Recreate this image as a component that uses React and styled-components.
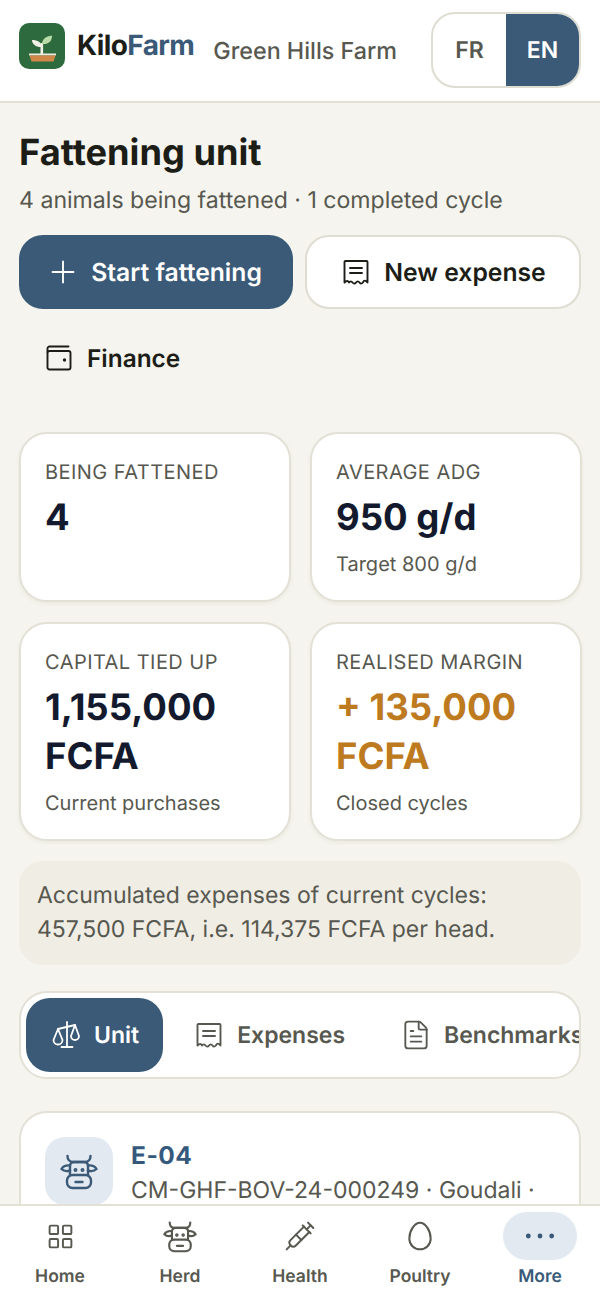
import styled, { createGlobalStyle } from "styled-components";
import { Plus, FileText, LayoutGrid, Syringe, Egg, Ellipsis } from "lucide-react";

const GlobalStyle = createGlobalStyle`
  * { box-sizing: border-box; }
  html, body { margin: 0; height: 100%; overflow: hidden; }
  body {
    background: #f5f4ee;
    font-family: Inter, "Noto Sans", sans-serif;
    color: #1c1d17;
    text-rendering: geometricPrecision;
  }
`;

const Page = styled.div`
  height: 1298px;
  overflow: hidden;
  display: flex;
  flex-direction: column;
`;

const Header = styled.header`
  flex: none;
  height: 103px;
  display: flex;
  align-items: center;
  padding: 0 19px;
  background: #fff;
  border-bottom: 2px solid #e3e1d6;
`;

const LogoMark = styled.svg`
  width: 46px;
  height: 46px;
  flex: none;
  margin-bottom: 9px;
`;

const Brand = styled.div`
  margin-left: 12px;
  margin-bottom: 12px;
  font-size: 28px;
  font-weight: 700;
  letter-spacing: -0.6px;
`;

const BrandAccent = styled.span`
  color: #3a5a78;
`;

const FarmName = styled.div`
  margin-left: 19px;
  flex: 1;
  font-size: 23.3px;
  font-weight: 500;
  color: #57584f;
  white-space: nowrap;
`;

const LangSwitch = styled.div`
  display: flex;
  width: 150px;
  height: 76px;
  margin-bottom: 1px;
  border: 2px solid #dfddd1;
  border-radius: 24px;
  overflow: hidden;
  background: #fff;
`;

const LangOption = styled.div`
  flex: 1;
  display: flex;
  align-items: center;
  justify-content: center;
  font-size: 23px;
  font-weight: 600;
  color: ${(p) => (p.$active ? "#fff" : "#57584f")};
  background: ${(p) => (p.$active ? "#3a5a78" : "transparent")};
`;

const Main = styled.main`
  flex: 1;
  padding: 0 19px;
  min-height: 0;
`;

const Title = styled.h1`
  margin: 25px 0 0;
  font-size: 36.2px;
  line-height: 48px;
  font-weight: 700;
`;

const Subtitle = styled.p`
  margin: 8px 0 0;
  font-size: 23.1px;
  line-height: 32px;
  color: #57584f;
`;

const Actions = styled.div`
  display: flex;
  flex-wrap: wrap;
  gap: 12px;
  margin-top: 19px;
`;

const ActionButton = styled.div`
  height: 74px;
  display: flex;
  align-items: center;
  justify-content: center;
  gap: ${(p) => (p.$primary ? "10px" : "12px")};
  font-size: 24.7px;
  font-weight: 600;
  border-radius: 24px;
  padding-right: ${(p) => (p.$primary ? "5px" : "0")};
  color: ${(p) => (p.$primary ? "#fff" : "#1c1d17")};
  background: ${(p) => (p.$primary ? "#3a5a78" : "#fff")};
  border: 2px solid ${(p) => (p.$primary ? "#3a5a78" : "#dfddd1")};
  width: ${(p) => (p.$primary ? "274px" : "276px")};
`;

const GhostButton = styled.div`
  height: 74px;
  display: flex;
  align-items: center;
  gap: 15px;
  padding: 0 27px;
  font-size: 24.4px;
  font-weight: 600;
  margin-top: 12px;
`;

const Stats = styled.div`
  display: grid;
  grid-template-columns: 272px 272px;
  gap: 20px 19px;
  margin-top: 37px;
`;

const StatCard = styled.div`
  background: #fff;
  border: 2px solid #e3e1d6;
  border-radius: 28px;
  padding: 25px 24px 22px;
  box-shadow: 0 2px 4px rgba(60, 60, 40, 0.06);
`;

const StatLabel = styled.div`
  font-size: 20px;
  line-height: 26px;
  font-weight: 400;
  letter-spacing: 0.45px;
  color: #57584f;
`;

const StatValue = styled.div`
  margin-top: 8px;
  font-size: 36.5px;
  line-height: 49px;
  font-weight: 700;
  color: ${(p) => (p.$accent ? "#bd7a1f" : "#131a2e")};
`;

const StatNote = styled.div`
  margin-top: 8px;
  font-size: 20px;
  line-height: 28px;
  color: #57584f;
`;

const Notice = styled.div`
  margin-top: 20px;
  padding: 17px 18px 19px;
  border-radius: 24px;
  background: #f0ede5;
  font-size: 23px;
  line-height: 34px;
  color: #57584f;
`;

const Tabs = styled.div`
  margin-top: 26px;
  height: 88px;
  display: flex;
  align-items: center;
  gap: 5px;
  padding: 0 5px;
  background: #fff;
  border: 2px solid #e3e1d6;
  border-radius: 28px;
  overflow: hidden;
`;

const Tab = styled.div`
  flex: none;
  height: 74px;
  display: flex;
  align-items: center;
  gap: 12px;
  padding: 0 ${(p) => (p.$active ? "24px" : "25px")};
  border-radius: 24px;
  font-size: 23px;
  font-weight: 600;
  color: ${(p) => (p.$active ? "#fff" : "#57584f")};
  background: ${(p) => (p.$active ? "#3a5a78" : "transparent")};
`;

const AnimalCard = styled.div`
  margin-top: 32px;
  display: flex;
  gap: 18px;
  padding: 24px;
  background: #fff;
  border: 2px solid #e3e1d6;
  border-radius: 28px;
  height: 200px;
`;

const AnimalIcon = styled.div`
  flex: none;
  width: 68px;
  height: 68px;
  display: flex;
  align-items: center;
  justify-content: center;
  border-radius: 20px;
  background: #e2e9f1;
  color: #3a5a78;
`;

const AnimalBody = styled.div`
  min-width: 0;
  padding-top: 2px;
`;

const AnimalName = styled.div`
  font-size: 24.5px;
  line-height: 32px;
  font-weight: 700;
  letter-spacing: 0.5px;
  color: #35597c;
`;

const AnimalMeta = styled.div`
  margin-top: 3px;
  font-size: 23px;
  line-height: 32px;
  color: #57584f;
`;

const BottomNav = styled.nav`
  position: fixed;
  left: 0;
  right: 0;
  bottom: 0;
  height: 94px;
  display: grid;
  grid-template-columns: repeat(5, 1fr);
  background: #fff;
  border-top: 2px solid #e3e1d6;
`;

const NavItem = styled.div`
  display: flex;
  flex-direction: column;
  align-items: center;
  padding-top: 6px;
  font-size: 17.5px;
  font-weight: 600;
  color: ${(p) => (p.$active ? "#3a5a78" : "#57584f")};
`;

const NavIcon = styled.div`
  width: 74px;
  height: 48px;
  display: flex;
  align-items: center;
  justify-content: center;
  border-radius: 24px;
  background: ${(p) => (p.$active ? "#e2e9f1" : "transparent")};
`;

const NavLabel = styled.span`
  margin-top: 6px;
`;

// Logo: seedling in a terracotta tray on a green tile
const Logo = () => (
  <LogoMark viewBox="0 0 46 46">
    <rect width="46" height="46" rx="10" fill="#2d6a3e" />
    <path d="M22.800 31V20" stroke="#f4f1e6" strokeWidth="2.600" fill="none" />
    <path d="M22.800 24c-.3-4.500-4-7-9.800-7 .2 4.500 4 7.300 9.800 7z" fill="#f4f1e6" />
    <path d="M23 21c.2-5 3.500-7.500 10-8.500 0 6-3.500 9-10 8.500z" fill="#b9dca8" />
    <rect x="10" y="30.500" width="27" height="2" fill="#f0ece0" />
    <path d="M10.500 32.500h26l-2 6h-22z" fill="#cf8748" />
  </LogoMark>
);

// lucide has no cow, so it is drawn by hand
const Cow = ({ size }) => (
  <svg width={size} height={size} viewBox="5 3 38 38" fill="none" stroke="currentColor" strokeWidth="2.400" strokeLinecap="round" strokeLinejoin="round">
    <path d="M12.500 7c0 3.500 2 6 5.500 6h12c3.500 0 5.500-2.500 5.500-6" />
    <path d="M15 26v-9c0-2.500 1.500-4 4-4h10c2.500 0 4 1.500 4 4v9" />
    <path d="M15 16.500c-4-.5-7 1-8.500 3.500 2 2 5.500 2.500 8.500 1.500" />
    <path d="M33 16.500c4-.5 7 1 8.500 3.500-2 2-5.500 2.500-8.500 1.500" />
    <rect x="12" y="26" width="24" height="13" rx="5.500" />
    <path d="M20.500 33h7" />
    <circle cx="20.500" cy="21" r=".8" fill="currentColor" />
    <circle cx="27.500" cy="21" r=".8" fill="currentColor" />
  </svg>
);

const Receipt = () => (
  <svg width="32" height="28" viewBox="-3.500 -2 32 28" fill="none" stroke="currentColor" strokeWidth="1.900" strokeLinecap="round" strokeLinejoin="round">
    <path d="M1 22.500V2a1 1 0 0 1 1-1h21a1 1 0 0 1 1 1v20.500c-2-2.500-3.500-2.500-4.600 0-1.200 1.500-2.300 1.500-3.400 0-1.100-1.500-2.400-1.500-3.500 0-1.100 1.500-2.300 1.500-3.500 0-1.100-1.500-2.300-1.500-3.400 0-1.100-2-2.600-2-4.600 0z" />
    <path d="M6.500 8h12M6.500 13h12" />
  </svg>
);

const WalletIcon = () => (
  <svg width="26" height="26" viewBox="0 0 26 26" fill="none" stroke="currentColor" strokeWidth="1.900" strokeLinecap="round" strokeLinejoin="round">
    <path d="M1.500 7V3.500a2 2 0 0 1 2-2h19" />
    <rect x="1.500" y="6" width="23" height="18.500" rx="2" />
    <circle cx="18.500" cy="15" r=".7" fill="currentColor" />
  </svg>
);

const ScaleIcon = () => (
  <svg width="32" height="30" viewBox="-2 -1.500 32 30" fill="none" stroke="currentColor" strokeWidth="1.800" strokeLinecap="round" strokeLinejoin="round">
    <path d="M15 .5V25.500M9.500 25.500h11" />
    <path d="M6 7.500 23 3.500" />
    <path d="M6 7.500 1.500 18.500a4.500 4.500 0 0 0 9 0z" />
    <path d="M23 3.500 19 14.500a4 4 0 0 0 8 0z" />
  </svg>
);

const stats = [
  { label: "BEING FATTENED", value: "4" },
  { label: "AVERAGE ADG", value: "950 g/d", note: "Target 800 g/d" },
  { label: "CAPITAL TIED UP", value: "1,155,000 FCFA", note: "Current purchases" },
  { label: "REALISED MARGIN", value: "+ 135,000 FCFA", note: "Closed cycles", accent: true },
];

const navItems = [
  { label: "Home", icon: <LayoutGrid size={29} strokeWidth={1.600} /> },
  { label: "Herd", icon: <Cow size={34} /> },
  { label: "Health", icon: <Syringe size={32} strokeWidth={1.500} /> },
  { label: "Poultry", icon: <Egg size={32} strokeWidth={1.500} /> },
  { label: "More", icon: <Ellipsis size={40} strokeWidth={0.900} fill="currentColor" />, active: true },
];

export default function App() {
  return (
    <Page>
      <GlobalStyle />
      <Header>
        <Logo />
        <Brand>
          Kilo<BrandAccent>Farm</BrandAccent>
        </Brand>
        <FarmName>Green Hills Farm</FarmName>
        <LangSwitch>
          <LangOption>FR</LangOption>
          <LangOption $active>EN</LangOption>
        </LangSwitch>
      </Header>
      <Main>
        <Title>Fattening unit</Title>
        <Subtitle>4 animals being fattened · 1 completed cycle</Subtitle>
        <Actions>
          <ActionButton $primary>
            <Plus size={36} strokeWidth={1.250} />
            Start fattening
          </ActionButton>
          <ActionButton>
            <Receipt />
            New expense
          </ActionButton>
        </Actions>
        <GhostButton>
          <WalletIcon />
          Finance
        </GhostButton>
        <Stats>
          {stats.map((s) => (
            <StatCard key={s.label}>
              <StatLabel>{s.label}</StatLabel>
              <StatValue $accent={s.accent}>{s.value}</StatValue>
              {s.note && <StatNote>{s.note}</StatNote>}
            </StatCard>
          ))}
        </Stats>
        <Notice>Accumulated expenses of current cycles: 457,500 FCFA, i.e. 114,375 FCFA per head.</Notice>
        <Tabs>
          <Tab $active>
            <ScaleIcon />
            Unit
          </Tab>
          <Tab>
            <Receipt />
            Expenses
          </Tab>
          <Tab>
            <FileText size={32} strokeWidth={1.400} />
            Benchmarks
          </Tab>
        </Tabs>
        <AnimalCard>
          <AnimalIcon>
            <Cow size={38} />
          </AnimalIcon>
          <AnimalBody>
            <AnimalName>E-04</AnimalName>
            <AnimalMeta>CM-GHF-BOV-24-000249 · Goudali ·</AnimalMeta>
          </AnimalBody>
        </AnimalCard>
      </Main>
      <BottomNav>
        {navItems.map((n) => (
          <NavItem key={n.label} $active={n.active}>
            <NavIcon $active={n.active}>{n.icon}</NavIcon>
            <NavLabel>{n.label}</NavLabel>
          </NavItem>
        ))}
      </BottomNav>
    </Page>
  );
}
